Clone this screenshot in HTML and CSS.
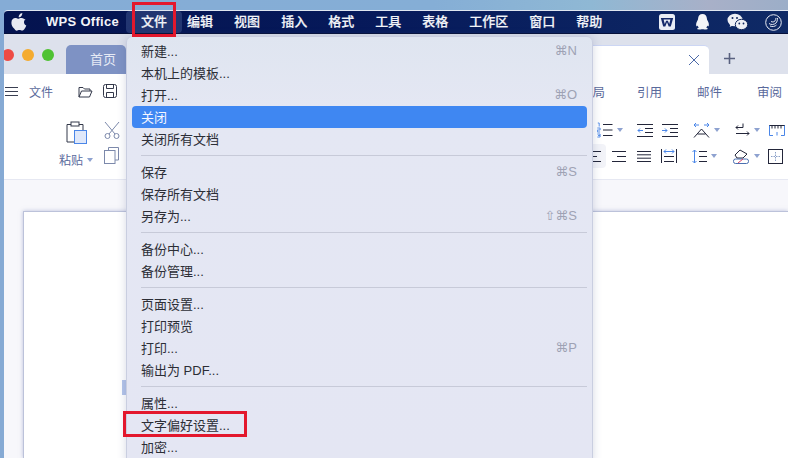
FILE: index.html
```html
<!DOCTYPE html>
<html lang="zh">
<head>
<meta charset="utf-8">
<title>WPS Office</title>
<link rel="stylesheet" href="styles.css">
</head>
<body>
<div class="screen">
  <div class="desktop-strip"></div>
  <div class="desktop">
    <header class="menubar">
      <svg class="apple" width="16" height="18" viewBox="0 0 16 18"><path fill="#e8eaf2" d="M11.300 0c.1 1.100-.3 2.100-.9 2.900-.7.800-1.700 1.400-2.700 1.300-.1-1 .4-2.100 1-2.800C9.300.6 10.400.1 11.300 0zM14.700 6.200c-1.100.7-1.700 1.700-1.700 3 0 1.500.9 2.700 2.300 3.200-.4 1.200-1 2.300-1.700 3.300-.7 1-1.400 1.900-2.500 1.900s-1.400-.6-2.700-.6c-1.200 0-1.700.7-2.700.7-1.100 0-1.800-1-2.600-2.100C1.200 13.800.4 11.500.4 9.700c0-3 1.900-4.600 3.900-4.600 1.100 0 1.900.7 2.700.7.700 0 1.700-.8 3-.8 1 0 2.600.3 3.700 1.200z"/></svg>
      <span class="menu-item app-name">WPS Office</span>
      <span class="menu-item active">文件</span>
      <span class="menu-item">编辑</span>
      <span class="menu-item">视图</span>
      <span class="menu-item">插入</span>
      <span class="menu-item">格式</span>
      <span class="menu-item">工具</span>
      <span class="menu-item">表格</span>
      <span class="menu-item">工作区</span>
      <span class="menu-item">窗口</span>
      <span class="menu-item">帮助</span>
      <div class="tray">
        <svg class="tray-w" width="16" height="16" viewBox="0 0 16 16"><rect width="16" height="16" rx="2.500" fill="#e9edf5"/><path d="M1.800 4h12.400l-2.400 8.500H9.700L8 8.200 6.300 12.500H4.200z" fill="#14296a"/><path d="M4.600 5.600h6.800l-1.200 4.300L8.900 6.800H7.100L5.800 9.900z" fill="#e9edf5"/></svg>
        <svg width="15" height="18" viewBox="0 0 15 18"><path fill="#f4f5f8" d="M7.500 1C10.200 1 11.800 3 11.900 5.600c0 1 .3 1.500.9 2.500.9 1.500 1.400 3.400.9 4.900-.3.700-1 .1-1.400-.6-.2 1-.6 1.600-1.200 2.200.9.300 1.900.8 1.500 1.500-.3.500-1.800.5-3.200.4-.7-.1-1.200-.3-1.900-.3s-1.200.2-1.900.3c-1.400.1-2.900.1-3.200-.4-.4-.7.6-1.200 1.500-1.500-.6-.6-1-1.200-1.200-2.200-.4.700-1.100 1.300-1.400.6-.5-1.500 0-3.400.9-4.900.6-1 .9-1.500.9-2.500C3.200 3 4.800 1 7.500 1z"/></svg>
        <svg width="21" height="18" viewBox="0 0 21 18"><ellipse cx="8" cy="7" rx="7.500" ry="6.300" fill="#eef0f5"/><path d="M3.500 11l-.8 3 3-1.600z" fill="#eef0f5"/><ellipse cx="14.500" cy="11.500" rx="6.200" ry="5.200" fill="#eef0f5" stroke="#12285e"/><circle cx="5.500" cy="5" r="1" fill="#12285e"/><circle cx="10" cy="5" r="1" fill="#12285e"/><circle cx="12.300" cy="10.500" r=".9" fill="#12285e"/><circle cx="16.500" cy="10.500" r=".9" fill="#12285e"/></svg>
        <svg width="17" height="17" viewBox="0 0 17 17" fill="none" stroke="#e8ebf3"><circle cx="8.500" cy="8.500" r="7.800"/><path d="M4 9.500c2 1.500 5 1.300 7-.5 1-1 1.500-3 1.500-5M5 12c2.500 1 5 .5 6.500-1M6 7.500c1.500.8 3 .5 4-.6 .6-.8 1-2 1-3"/></svg>
      </div>
    </header>

    <main class="window">
      <div class="titlebar">
        <div class="lights"><i class="light red"></i><i class="light amber"></i><i class="light green"></i></div>
        <div class="tab home-tab">首页</div>
        <div class="tab doc-tab">
          <svg width="12" height="12" viewBox="0 0 12 12" stroke="#4d6aa8" fill="none"><path d="M1 1l10 10M11 1L1 11"/></svg>
        </div>
        <svg class="plus" width="11" height="11" viewBox="0 0 11 11" stroke="#59617f" stroke-width="1.600"><path d="M5.500 0v11M0 5.500h11"/></svg>
      </div>

      <div class="quickbar">
        <svg class="hamburger" width="13" height="9" viewBox="0 0 13 9" stroke="#3a3f52"><path d="M0 .5h13M0 4.500h13M0 8.500h13"/></svg>
        <span class="qlabel">文件</span>
        <svg class="qicon first" width="15" height="13" viewBox="0 0 15 13" fill="none" stroke="#33384a"><path d="M1 12V2.500h4l1.500 1.500H12V6M1 12l2.500-6H14l-2.500 6z"/></svg>
        <svg class="qicon" width="14" height="14" viewBox="0 0 14 14" fill="none" stroke="#33384a"><rect x=".5" y=".5" width="13" height="13" rx="2"/><path d="M3.500 .5v4h7v-4M3.500 13.500V8.500h7v5"/></svg>
        <div class="ribbon-tabs">
          <span class="cut-tab">局</span><span>引用</span><span>邮件</span><span>审阅</span>
        </div>
      </div>

      <div class="ribbon">
        <div class="paste-group">
          <svg width="22" height="24" viewBox="0 0 22 24" fill="none"><path d="M1 3.500h16V21H1z" stroke="#33384a" fill="#fff"/><rect x="5" y="1" width="8" height="4" stroke="#33384a" fill="#fff"/><rect x="8.500" y="9.500" width="12" height="13" fill="#dfe8fa" stroke="#4a86e8"/></svg>
          <span class="paste-label">粘贴 <i class="caret"></i></span>
        </div>
        <div class="clip-group">
          <svg width="16" height="18" viewBox="0 0 16 18" fill="none" stroke="#7c89ab"><path d="M1 1l10 12M15 1L5 13"/><circle cx="3.500" cy="15" r="2.500"/><circle cx="12.500" cy="15" r="2.500"/></svg>
          <svg width="15" height="17" viewBox="0 0 15 17" fill="none" stroke="#7c89ab"><path d="M4.500 3V.5h10V13H11"/><rect x=".5" y="3.500" width="10.500" height="13" fill="#fff"/></svg>
        </div>
        <div class="tool-grid">
          <div class="tool-row">
            <svg width="16" height="16" viewBox="0 0 16 16" fill="none"><path d="M6 2.500h9.500M6 8h9.500M6 13.500h9.500" stroke="#23263a"/><path d="M.8 1h1.400v3.500M.3 6h2.800v2H.3v2h2.800M.3 12h2.800v3H.3M1 13.500h2" stroke="#4a86e8" stroke-width=".9"/></svg><i class="caret"></i>
            <svg class="gap-a" width="16" height="13" viewBox="0 0 16 13" fill="none"><path d="M0 .5h16M8 4.500h8M8 8.500h8M0 12.500h16" stroke="#23263a"/><path d="M6 6.500H1M3 4.500l-2 2 2 2" stroke="#4a86e8"/></svg>
            <svg class="gap-b" width="16" height="13" viewBox="0 0 16 13" fill="none"><path d="M0 .5h16M8 4.500h8M8 8.500h8M0 12.500h16" stroke="#23263a"/><path d="M0 6.500h5M3 4.500l2 2-2 2" stroke="#4a86e8"/></svg>
            <svg class="gap-c" width="17" height="15" viewBox="0 0 17 15" fill="none"><path d="M1 14.500L8.500 6l7.500 8.500M4.500 11h8" stroke="#23263a"/><path d="M1 2h5M3 0L1 2l2 2M11 2h5M14 0l2 2-2 2" stroke="#4a86e8"/></svg><i class="caret"></i>
            <svg class="gap-d" width="15" height="14" viewBox="0 0 15 14" fill="none" stroke="#23263a"><path d="M8 .5v4H1M3 2.500l-2 2 2 2M1 10.500h13M12 8.500l2 2-2 2"/></svg><i class="caret"></i>
            <svg class="gap-e" width="16" height="12" viewBox="0 0 16 12" fill="none"><path d="M0 1.500h16M3 1.500v3M6 1.500v3M9 1.500v3M12 1.500v3" stroke="#23263a"/><path d="M.5 1.500v10H4M15.500 1.500v10H12M8 8v3.500" stroke="#4a86e8"/></svg>
          </div>
          <div class="tool-row second">
            <div class="selected-align"><svg width="9" height="11" viewBox="0 0 9 11" stroke="#23263a"><path d="M0 .5h9M0 5.500h5M0 10.500h9"/></svg></div>
            <svg class="gap-f" width="14" height="11" viewBox="0 0 14 11" stroke="#23263a"><path d="M0 .5h14M5 5.500h9M0 10.500h14"/></svg>
            <svg class="gap-g" width="14" height="11" viewBox="0 0 14 11" stroke="#23263a"><path d="M0 .5h14M0 3.800h14M0 7.200h14M0 10.500h14"/></svg>
            <svg class="gap-h" width="16" height="14" viewBox="0 0 16 14" fill="none"><path d="M.5 0v14M15.500 0v14M3 7.500h10M3 12.500h10" stroke="#23263a"/><path d="M3 2.500h10M5 .5l-2 2 2 2M11 .5l2 2-2 2" stroke="#4a86e8"/></svg>
            <svg class="gap-i" width="15" height="15" viewBox="0 0 15 15" fill="none"><path d="M7 2.500h8M7 7.500h8M7 12.500h8" stroke="#23263a"/><path d="M2.500 1v13M.5 3l2-2 2 2M.5 12l2 2 2-2" stroke="#4a86e8"/></svg><i class="caret"></i>
            <svg class="gap-j" width="17" height="15" viewBox="0 0 17 15" fill="none"><path d="M2 6l5-5 7 4-4 4H4z" stroke="#23263a" fill="#fff"/><rect x=".5" y="10" width="15" height="4.500" rx="2" stroke="#4a6fb0"/><path d="M5 14l5-4" stroke="#d9456a"/></svg><i class="caret"></i>
            <svg class="gap-k" width="15" height="15" viewBox="0 0 15 15" fill="none"><rect x=".5" y=".5" width="14" height="14" stroke="#23263a"/><path d="M7.500 3v9M3 7.500h9" stroke="#8aa0c8" stroke-dasharray="1.500 1"/></svg>
          </div>
        </div>
      </div>

      <div class="doc-area">
        <div class="page"></div>
      </div>
    </main>
  </div>

  <div class="page-marker"></div>

  <nav class="file-menu">
    <div class="mi"><span>新建...</span><kbd>⌘N</kbd></div>
    <div class="mi"><span>本机上的模板...</span></div>
    <div class="mi"><span>打开...</span><kbd>⌘O</kbd></div>
    <div class="mi selected"><span>关闭</span></div>
    <div class="mi"><span>关闭所有文档</span></div>
    <hr>
    <div class="mi"><span>保存</span><kbd>⌘S</kbd></div>
    <div class="mi"><span>保存所有文档</span></div>
    <div class="mi"><span>另存为...</span><kbd>⇧⌘S</kbd></div>
    <hr>
    <div class="mi"><span>备份中心...</span></div>
    <div class="mi"><span>备份管理...</span></div>
    <hr>
    <div class="mi"><span>页面设置...</span></div>
    <div class="mi"><span>打印预览</span></div>
    <div class="mi"><span>打印...</span><kbd>⌘P</kbd></div>
    <div class="mi"><span>输出为 PDF...</span></div>
    <hr>
    <div class="mi"><span>属性...</span></div>
    <div class="mi"><span>文字偏好设置...</span></div>
    <div class="mi"><span>加密...</span></div>
  </nav>

  <div class="callout callout-file"></div>
  <div class="callout callout-pref"></div>
</div>
</body>
</html>
```

FILE: styles.css
```css
* { box-sizing: border-box; }
html, body { margin: 0; padding: 0; }
body {
  width: 788px;
  height: 458px;
  overflow: hidden;
  font-family: "Liberation Sans", "Noto Sans CJK SC", sans-serif;
}
.screen {
  position: relative;
  width: 788px;
  height: 458px;
  overflow: hidden;
  background: #86aad4;
}
.desktop-strip {
  height: 10px;
  background: linear-gradient(90deg, #85acd6 0%, #85aed6 55%, #8fb8d4 75%, #a8b0c8 90%, #9caec8 100%);
}
.desktop {
  height: 448px;
  margin-left: 4px;
  display: flex;
  flex-direction: column;
}
.menubar {
  height: 24px;
  flex: none;
  display: flex;
  align-items: center;
  background: linear-gradient(90deg, #04134f 0%, #06195a 45%, #0f2a66 100%);
  border-top: 1px solid #dfe6f0;
  border-radius: 4px 0 0 0;
  border-bottom: 1px solid #05103a;
  color: #f2f4f8;
  font-size: 13px;
  font-weight: 500;
  padding-left: 7px;
}
.apple { margin-right: 19px; }
.menu-item { line-height: 22px; -webkit-text-stroke: .2px #f2f4f8; margin-right: 21px; white-space: nowrap; }
.menu-item.app-name { font-weight: 700; margin-right: 7px; letter-spacing: .3px; -webkit-text-stroke: 0; }
.menu-item.active { background: rgba(90,115,170,.35); border-radius: 4px; padding: 0 15px; margin-right: 5px; }
.tray { margin-left: auto; display: flex; align-items: center; gap: 17px; padding-right: 6px; }
.tray-w { margin-right: 3px; }

.window { flex: 1; background: #fff; display: flex; flex-direction: column; }
.titlebar {
  height: 40px;
  flex: none;
  display: flex;
  align-items: flex-end;
  background: #dde1ec;
  overflow: hidden;
}
.lights { display: flex; gap: 8px; align-self: center; margin-left: -2px; margin-top: 2px; }
.light { width: 12px; height: 12px; border-radius: 50%; display: block; }
.red { background: #ee4b45; }
.amber { background: #f4ab2f; }
.green { background: #4fc233; }
.tab { height: 29px; display: flex; align-items: center; border-radius: 5px 5px 0 0; }
.home-tab {
  width: 60px;
  margin-left: 12px;
  background: #7e92c4;
  color: #e6eaf5;
  font-size: 13px;
  justify-content: center;
  padding: 0 0 2px 14px;
}
.doc-tab {
  margin-left: auto;
  width: 165px;
  background: #fff;
  border-top: 1px solid #ccd6f4;
  justify-content: flex-end;
  padding-right: 9px;
}
.plus { margin: 0 53px 10px 15px; }
.quickbar {
  height: 38px;
  flex: none;
  display: flex;
  align-items: center;
  padding-bottom: 4px;
  font-size: 12px;
  color: #5a6a9c;
}
.hamburger { margin-left: 1px; }
.qlabel { margin-left: 11px; }
.qicon.first { margin-left: 25px; }
.qicon { margin-left: 10px; }
.ribbon-tabs { margin-left: auto; display: flex; gap: 35px; padding-right: 6px; font-size: 12.500px; }
.cut-tab { margin-right: -3px; }
.ribbon {
  height: 68px;
  flex: none;
  display: flex;
  background: #fff;
  border-bottom: 1px solid #e6e8f2;
}
.paste-group {
  margin-left: 60px;
  display: flex;
  flex-direction: column;
  align-items: center;
  width: 36px;
  margin-top: 9px;
  gap: 6px;
  position: relative;
  left: -5px;
}
.paste-label { font-size: 12px; color: #5a6a9c; white-space: nowrap; display: flex; align-items: center; gap: 4px; margin-left: -2px; }
.clip-group { display: flex; flex-direction: column; gap: 8px; margin: 9px 0 0 4px; }
.caret {
  display: inline-block;
  width: 0;
  height: 0;
  border-left: 3px solid transparent;
  border-right: 3px solid transparent;
  border-top: 4px solid #8ea2d0;
  margin-left: 4px;
}
.paste-label .caret { margin-left: 0; }
.tool-grid {
  margin-left: auto;
  display: flex;
  flex-direction: column;
  gap: 5px;
  margin-top: 9px;
  width: 196px;
}
.tool-row { display: flex; align-items: center; height: 18px; }
.tool-row:first-child { padding-left: 5px; }
.tool-row.second { height: 24px; }
.selected-align { width: 14px; height: 24px; display: flex; align-items: center; background: #f2f3f8; border-radius: 0 4px 4px 0; }
.gap-a { margin-left: 14px; }
.gap-b { margin-left: 9px; }
.gap-c { margin-left: 15px; }
.gap-d { margin-left: 15px; }
.gap-e { margin-left: 9px; }
.gap-f { margin-left: 6px; }
.gap-g { margin-left: 11px; }
.gap-h { margin-left: 10px; }
.gap-i { margin-left: 15px; }
.gap-j { margin-left: 16px; }
.gap-k { margin-left: 8px; }
.doc-area { flex: 1; background: #f7f7fb; padding: 31px 0 0 19px; }
.page { height: 100%; background: #fff; border: 1px solid #bcc2da; border-bottom: 0; border-right: 0; box-shadow: 0 0 4px rgba(130,140,190,.5); }
.page-marker { position: absolute; left: 122px; top: 380px; width: 5px; height: 15px; background: #b4c5ea; }

.file-menu {
  position: absolute;
  left: 126px;
  top: 36px;
  width: 467px;
  height: 430px;
  padding: 3px 5px;
  background: linear-gradient(180deg, #dfe5f0 0, #e4e7f3 70px, #e4e6f3 100%);
  border: 1px solid #c9cee0;
  border-radius: 6px;
  box-shadow: 0 0 10px rgba(70,80,130,.22);
  font-size: 13px;
  color: #2c2e36;
}
.mi {
  height: 22px;
  display: flex;
  align-items: center;
  justify-content: space-between;
  padding: 0 10px 2px 9px;
  border-radius: 4px;
}
.mi.selected { background: #3f87f2; color: #f4f7ff; }
.mi kbd { font-family: "Liberation Sans", "DejaVu Sans", sans-serif; font-size: 13px; color: #9ea2b4; }
.file-menu hr { height: 1px; border: 0; background: #c7cad8; margin: 5px 0 5px 9px; }

.callout { position: absolute; border: 3px solid #e3182d; background: transparent; }
.callout-file { left: 132px; top: 2px; width: 44px; height: 35px; }
.callout-pref { left: 123px; top: 411px; width: 124px; height: 26px; }
```
